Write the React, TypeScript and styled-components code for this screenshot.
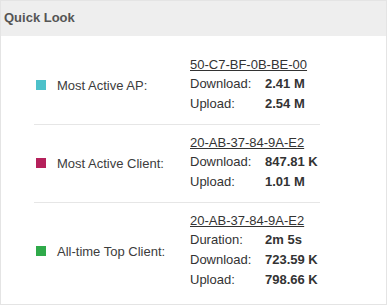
import { Fragment } from "react";
import styled, { createGlobalStyle } from "styled-components";

const GlobalStyle = createGlobalStyle`
  body {
    margin: 0;
    background: #ffffff;
    font-family: Arial, "Liberation Sans", sans-serif;
  }
`;

const Card = styled.div`
  width: 387px;
  height: 305px;
  box-sizing: border-box;
  border: 1px solid #e4e4e4;
  background: #ffffff;
`;

const Header = styled.div`
  height: 35px;
  box-sizing: border-box;
  background: #eeeeee;
  display: flex;
  align-items: center;
  padding: 0 0 2px 3px;
  font-size: 13px;
  font-weight: bold;
  color: #555555;
`;

const Body = styled.div`
  padding: 11px 0 4px 33px;
`;

const Section = styled.div<{ $last?: boolean }>`
  width: 286px;
  display: grid;
  grid-template-columns: 156px 1fr;
  align-items: center;
  padding: 9px 0 10px;
  border-bottom: ${(p) => (p.$last ? "none" : "1px solid #e6e6e6")};
`;

const Label = styled.div`
  display: flex;
  align-items: center;
  gap: 11px;
  padding-left: 2px;
  font-size: 13px;
  color: #3c3c3c;
`;

const Swatch = styled.span<{ $color: string }>`
  width: 10px;
  height: 10px;
  background: ${(p) => p.$color};
`;

const Details = styled.div`
  display: grid;
  grid-template-columns: 75px auto;
  grid-template-rows: 18px;
  grid-auto-rows: 20px;
  align-items: center;
  font-size: 13px;
  color: #333333;
`;

const Mac = styled.a`
  grid-column: 1 / span 2;
  align-self: start;
  line-height: 18px;
  text-decoration: underline;
  color: #333333;
`;

const Key = styled.div`
  line-height: 20px;
`;

const Value = styled.div`
  line-height: 20px;
  font-weight: bold;
`;

type Stat = { key: string; value: string };

type Entry = {
  label: string;
  color: string;
  mac: string;
  stats: Stat[];
};

const entries: Entry[] = [
  {
    label: "Most Active AP:",
    color: "#4dc1ca",
    mac: "50-C7-BF-0B-BE-00",
    stats: [
      { key: "Download:", value: "2.41 M" },
      { key: "Upload:", value: "2.54 M" },
    ],
  },
  {
    label: "Most Active Client:",
    color: "#b5215b",
    mac: "20-AB-37-84-9A-E2",
    stats: [
      { key: "Download:", value: "847.81 K" },
      { key: "Upload:", value: "1.01 M" },
    ],
  },
  {
    label: "All-time Top Client:",
    color: "#2faa4a",
    mac: "20-AB-37-84-9A-E2",
    stats: [
      { key: "Duration:", value: "2m 5s" },
      { key: "Download:", value: "723.59 K" },
      { key: "Upload:", value: "798.66 K" },
    ],
  },
];

const App = () => {
  return (
    <>
      <GlobalStyle />
      <Card>
        <Header>Quick Look</Header>
        <Body>
          {entries.map((entry, i) => (
            <Section key={entry.label} $last={i === entries.length - 1}>
              <Label>
                <Swatch $color={entry.color} />
                {entry.label}
              </Label>
              <Details>
                <Mac>{entry.mac}</Mac>
                {entry.stats.map((s) => (
                  <Fragment key={s.key}>
                    <Key>{s.key}</Key>
                    <Value>{s.value}</Value>
                  </Fragment>
                ))}
              </Details>
            </Section>
          ))}
        </Body>
      </Card>
    </>
  );
};

export default App;
